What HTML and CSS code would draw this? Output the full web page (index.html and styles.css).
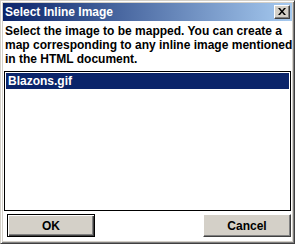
FILE: index.html
```html
<!DOCTYPE html>
<html lang="en">
<head>
    <meta charset="UTF-8">
    <title>Select Inline Image</title>
    <link rel="stylesheet" href="styles.css">
</head>
<body>
    <div class="window">
        <div class="titlebar">
            <span class="title">Select Inline Image</span>
            <div class="close">
                <svg width="8" height="7" viewBox="0 0 8 7">
                    <path d="M0 0h2l2 2.5 2-2.5h2l-3 3.5 3 3.5h-2l-2-2.5-2 2.5h-2l3-3.5z" fill="#000"/>
                </svg>
            </div>
        </div>
        <div class="content">
            <p class="prompt">Select the image to be mapped. You can create a<br>map corresponding to any inline image mentioned<br>in the HTML document.</p>
            <div class="listbox">
                <div class="item selected">Blazons.gif</div>
            </div>
            <div class="buttons">
                <div class="btn default"><span>OK</span></div>
                <div class="btn"><span>Cancel</span></div>
            </div>
        </div>
    </div>
</body>
</html>
```

FILE: styles.css
```css
body {
    margin: 0;
    font-family: "Liberation Sans", Arial, sans-serif;
    font-weight: bold;
    font-size: 12px;
}
.window {
    width: 295px;
    height: 244px;
    box-sizing: border-box;
    background: #d4d0c8;
    border-top: 1px solid #d4d0c8;
    border-left: 1px solid #d4d0c8;
    border-right: 1px solid #404040;
    border-bottom: 1px solid #404040;
    box-shadow: inset 1px 1px #fff, inset -1px -1px #808080;
    padding: 2px;
    display: flex;
    flex-direction: column;
}
.titlebar {
    height: 18px;
    background: linear-gradient(to right, #0a246a, #a6caf0);
    display: flex;
    align-items: center;
    justify-content: space-between;
    padding: 0 2px 0 2px;
    color: white;
}
.close {
    width: 16px;
    height: 14px;
    box-sizing: border-box;
    background: #d4d0c8;
    border-top: 1px solid #fff;
    border-left: 1px solid #fff;
    border-right: 1px solid #404040;
    border-bottom: 1px solid #404040;
    box-shadow: inset -1px -1px #808080;
    display: flex;
    align-items: center;
    justify-content: center;
}
.close svg {
    margin: 0 1px 1px 0;
}
.content {
    flex: 1;
    background: white;
    padding: 0 1px 0 1px;
}
.prompt {
    margin: 3px 0 0 1px;
    line-height: 14px;
    color: #000;
    white-space: nowrap;
}
.listbox {
    margin-top: 5px;
    height: 140px;
    box-sizing: border-box;
    border: 1px solid #000;
    padding: 1px;
}
.item {
    height: 16px;
    line-height: 16px;
    padding-left: 2px;
}
.item.selected {
    background: #0a246a;
    color: white;
}
.buttons {
    margin-top: 3px;
    display: flex;
    justify-content: space-between;
    padding: 0 0 0 3px;
}
.btn {
    width: 88px;
    height: 23px;
    box-sizing: border-box;
    background: #d4d0c8;
    border-top: 1px solid #fff;
    border-left: 1px solid #fff;
    border-right: 1px solid #404040;
    border-bottom: 1px solid #404040;
    box-shadow: inset -1px -1px #808080;
    display: flex;
    align-items: center;
    justify-content: center;
}
.btn.default {
    border: 1px solid #000;
    box-shadow: inset 1px 1px #fff, inset -1px -1px #404040, inset -2px -2px #808080;
}
```
